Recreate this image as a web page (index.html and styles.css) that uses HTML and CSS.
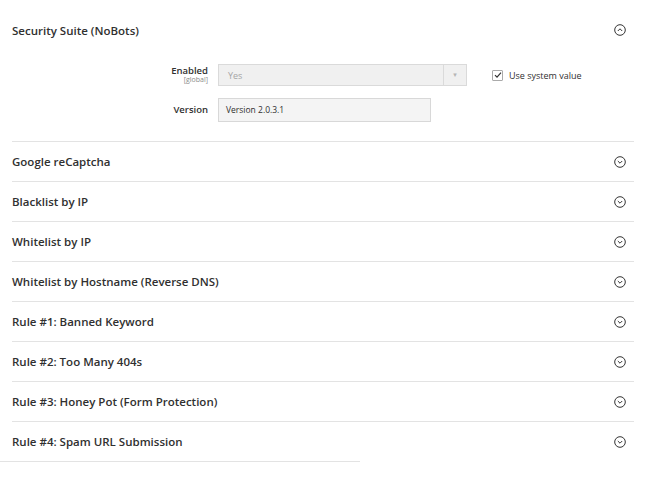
FILE: index.html
```html
<!DOCTYPE html>
<html lang="en">
<head>
    <meta charset="UTF-8">
    <title>Security Suite (NoBots)</title>
    <link rel="stylesheet" href="styles.css">
</head>
<body>
    <div class="config">
        <div class="section open">
            <div class="section-head">
                <span class="section-title">Security Suite (NoBots)</span>
                <svg class="toggle" width="12" height="12" viewBox="0 0 12 12"><circle cx="6" cy="6" r="5.3" fill="none" stroke="#333" stroke-width="1"/><path d="M3.8 7 L6 4.8 L8.2 7" fill="none" stroke="#333" stroke-width="1"/></svg>
            </div>
            <div class="fields">
                <div class="field-label">
                    <span class="label-text">Enabled</span>
                    <span class="scope">[global]</span>
                </div>
                <div class="select-box">
                    <span class="select-value">Yes</span>
                    <span class="select-arrow">&#9662;</span>
                </div>
                <label class="use-default">
                    <span class="checkbox">
                        <svg width="8" height="8" viewBox="0 0 8 8"><path d="M1 4.2 L3 6.2 L7 1.6" fill="none" stroke="#333" stroke-width="1.2"/></svg>
                    </span>
                    Use system value
                </label>

                <div class="field-label">
                    <span class="label-text">Version</span>
                </div>
                <div class="text-box">Version 2.0.3.1</div>
                <div></div>
            </div>
        </div>

        <div class="section"><div class="section-head"><span class="section-title">Google reCaptcha</span><svg class="toggle" width="12" height="12" viewBox="0 0 12 12"><circle cx="6" cy="6" r="5.3" fill="none" stroke="#333" stroke-width="1"/><path d="M3.8 5 L6 7.2 L8.2 5" fill="none" stroke="#333" stroke-width="1"/></svg></div></div>
        <div class="section"><div class="section-head"><span class="section-title">Blacklist by IP</span><svg class="toggle" width="12" height="12" viewBox="0 0 12 12"><circle cx="6" cy="6" r="5.3" fill="none" stroke="#333" stroke-width="1"/><path d="M3.8 5 L6 7.2 L8.2 5" fill="none" stroke="#333" stroke-width="1"/></svg></div></div>
        <div class="section"><div class="section-head"><span class="section-title">Whitelist by IP</span><svg class="toggle" width="12" height="12" viewBox="0 0 12 12"><circle cx="6" cy="6" r="5.3" fill="none" stroke="#333" stroke-width="1"/><path d="M3.8 5 L6 7.2 L8.2 5" fill="none" stroke="#333" stroke-width="1"/></svg></div></div>
        <div class="section"><div class="section-head"><span class="section-title">Whitelist by Hostname (Reverse DNS)</span><svg class="toggle" width="12" height="12" viewBox="0 0 12 12"><circle cx="6" cy="6" r="5.3" fill="none" stroke="#333" stroke-width="1"/><path d="M3.8 5 L6 7.2 L8.2 5" fill="none" stroke="#333" stroke-width="1"/></svg></div></div>
        <div class="section"><div class="section-head"><span class="section-title">Rule #1: Banned Keyword</span><svg class="toggle" width="12" height="12" viewBox="0 0 12 12"><circle cx="6" cy="6" r="5.3" fill="none" stroke="#333" stroke-width="1"/><path d="M3.8 5 L6 7.2 L8.2 5" fill="none" stroke="#333" stroke-width="1"/></svg></div></div>
        <div class="section"><div class="section-head"><span class="section-title">Rule #2: Too Many 404s</span><svg class="toggle" width="12" height="12" viewBox="0 0 12 12"><circle cx="6" cy="6" r="5.3" fill="none" stroke="#333" stroke-width="1"/><path d="M3.8 5 L6 7.2 L8.2 5" fill="none" stroke="#333" stroke-width="1"/></svg></div></div>
        <div class="section"><div class="section-head"><span class="section-title">Rule #3: Honey Pot (Form Protection)</span><svg class="toggle" width="12" height="12" viewBox="0 0 12 12"><circle cx="6" cy="6" r="5.3" fill="none" stroke="#333" stroke-width="1"/><path d="M3.8 5 L6 7.2 L8.2 5" fill="none" stroke="#333" stroke-width="1"/></svg></div></div>
        <div class="section"><div class="section-head"><span class="section-title">Rule #4: Spam URL Submission</span><svg class="toggle" width="12" height="12" viewBox="0 0 12 12"><circle cx="6" cy="6" r="5.3" fill="none" stroke="#333" stroke-width="1"/><path d="M3.8 5 L6 7.2 L8.2 5" fill="none" stroke="#333" stroke-width="1"/></svg></div></div>
    </div>
    <div class="page-rule"></div>
</body>
</html>
```

FILE: styles.css
```css
body {
    margin: 0;
    background-color: #fff;
    font-family: "Open Sans", "DejaVu Sans", sans-serif;
    color: #303030;
}

.config {
    padding: 10px 14px 0 12px;
}

.section + .section {
    border-top: 1px solid #e3e3e3;
}

.section-head {
    display: flex;
    align-items: center;
    justify-content: space-between;
    height: 40px;
    padding-right: 8px;
}

.section + .section .section-head {
    height: 39px;
}

.section-title {
    font-size: 11.5px;
    font-weight: 600;
}

.toggle {
    display: block;
}

.fields {
    display: grid;
    grid-template-columns: 196px 249px auto;
    column-gap: 10px;
    row-gap: 12px;
    align-items: center;
    padding: 14px 0 19px;
}

.field-label {
    display: flex;
    flex-direction: column;
    align-items: flex-end;
    line-height: 1.15;
}

.label-text {
    font-size: 9.5px;
    font-weight: 600;
}

.scope {
    font-size: 7px;
    color: #8a8a8a;
}

.select-box {
    display: flex;
    align-items: center;
    justify-content: space-between;
    height: 20px;
    background-color: #f0f0f0;
    border: 1px solid #dadada;
}

.select-value {
    padding-left: 9px;
    font-size: 9px;
    color: #a5a5a5;
}

.select-arrow {
    width: 22px;
    height: 20px;
    line-height: 20px;
    text-align: center;
    border-left: 1px solid #dadada;
    font-size: 7px;
    color: #b5b5b5;
}

.use-default {
    display: flex;
    align-items: center;
    gap: 6px;
    margin-left: 15px;
    font-size: 9px;
    color: #303030;
}

.checkbox {
    display: flex;
    align-items: center;
    justify-content: center;
    width: 9px;
    height: 9px;
    border: 1px solid #aaa;
    border-radius: 1px;
    background-color: #fff;
}

.text-box {
    grid-column: 2 / 3;
    width: 204px;
    height: 22px;
    line-height: 22px;
    padding-left: 7px;
    background-color: #f4f4f4;
    border: 1px solid #d8d8d8;
    font-size: 8.5px;
    color: #303030;
    box-sizing: content-box;
}

.page-rule {
    width: 360px;
    border-top: 1px solid #e3e3e3;
}
```
